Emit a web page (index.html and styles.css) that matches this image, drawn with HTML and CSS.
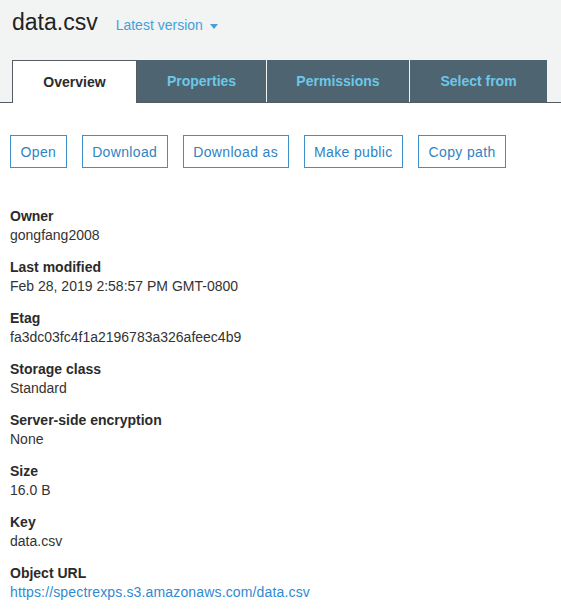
FILE: index.html
```html
<!DOCTYPE html>
<html>
<head>
<meta charset="utf-8">
<link rel="stylesheet" href="styles.css">
</head>
<body>
<div class="header">
  <div class="title-row">
    <h1 class="title">data.csv</h1>
    <a class="version">Latest version <span class="caret"></span></a>
  </div>
  <div class="tabs">
    <div class="tab active t1">Overview</div>
    <div class="tab t2">Properties</div>
    <div class="tab t3">Permissions</div>
    <div class="tab t4">Select from</div>
  </div>
</div>
<div class="content">
  <div class="actions">
    <button class="btn">Open</button>
    <button class="btn">Download</button>
    <button class="btn">Download as</button>
    <button class="btn">Make public</button>
    <button class="btn">Copy path</button>
  </div>
  <dl class="props">
    <div class="prop"><dt>Owner</dt><dd>gongfang2008</dd></div>
    <div class="prop"><dt>Last modified</dt><dd>Feb 28, 2019 2:58:57 PM GMT-0800</dd></div>
    <div class="prop"><dt>Etag</dt><dd>fa3dc03fc4f1a2196783a326afeec4b9</dd></div>
    <div class="prop"><dt>Storage class</dt><dd>Standard</dd></div>
    <div class="prop"><dt>Server-side encryption</dt><dd>None</dd></div>
    <div class="prop"><dt>Size</dt><dd>16.0 B</dd></div>
    <div class="prop"><dt>Key</dt><dd>data.csv</dd></div>
    <div class="prop"><dt>Object URL</dt><dd><a class="link">https://spectrexps.s3.amazonaws.com/data.csv</a></dd></div>
  </dl>
</div>
</body>
</html>
```
FILE: styles.css
```css
* { box-sizing: border-box; }
html, body { margin: 0; padding: 0; background: #fff; }
body { font-family: "Liberation Sans", Arial, sans-serif; color: #2b2b2b; font-size: 14px; }
.header { background: #f2f4f4; border-bottom: 1px solid #545b64; }
.title-row { display: flex; align-items: baseline; padding: 9px 0 0 12px; height: 60px; }
.title { margin: 0; font-size: 23px; font-weight: normal; line-height: 27px; color: #222; }
.version { margin-left: 18px; color: #44a0d6; font-size: 14px; display: inline-flex; align-items: center; gap: 7px; }
.caret { display: inline-block; width: 0; height: 0; border-left: 4.5px solid transparent; border-right: 4.5px solid transparent; border-top: 5px solid #44a0d6; margin-top: 2px; }
.tabs { display: flex; padding-left: 12px; height: 42px; gap: 1px; }
.tab { height: 42px; display: flex; align-items: center; justify-content: center; font-weight: bold; font-size: 14px; background: #4f6471; color: #6bc8e8; }
.tab.active { background: #fff; color: #2b2b2b; border: 1px solid #545b64; border-bottom: none; height: 43px; margin-bottom: -1px; margin-right: -1px; }
.t1 { width: 125px; }
.t2 { width: 129px; }
.t3 { width: 142px; }
.t4 { width: 137px; }
.content { padding: 32px 10px 0 10px; }
.actions { display: flex; gap: 15px; }
.btn { font-family: inherit; font-size: 14px; height: 33px; padding: 0 9.5px; letter-spacing: 0.35px; background: #fff; border: 1px solid #3f8fca; color: #2f83c5; border-radius: 0; }
.props { margin: 39px 0 0 0; display: flex; flex-direction: column; gap: 13px; }
.prop dt { font-weight: bold; line-height: 19px; color: #2b2b2b; }
.prop dd { margin: 0; line-height: 19px; color: #333; }
.link { color: #2f8ad0; letter-spacing: 0.15px; }
```
